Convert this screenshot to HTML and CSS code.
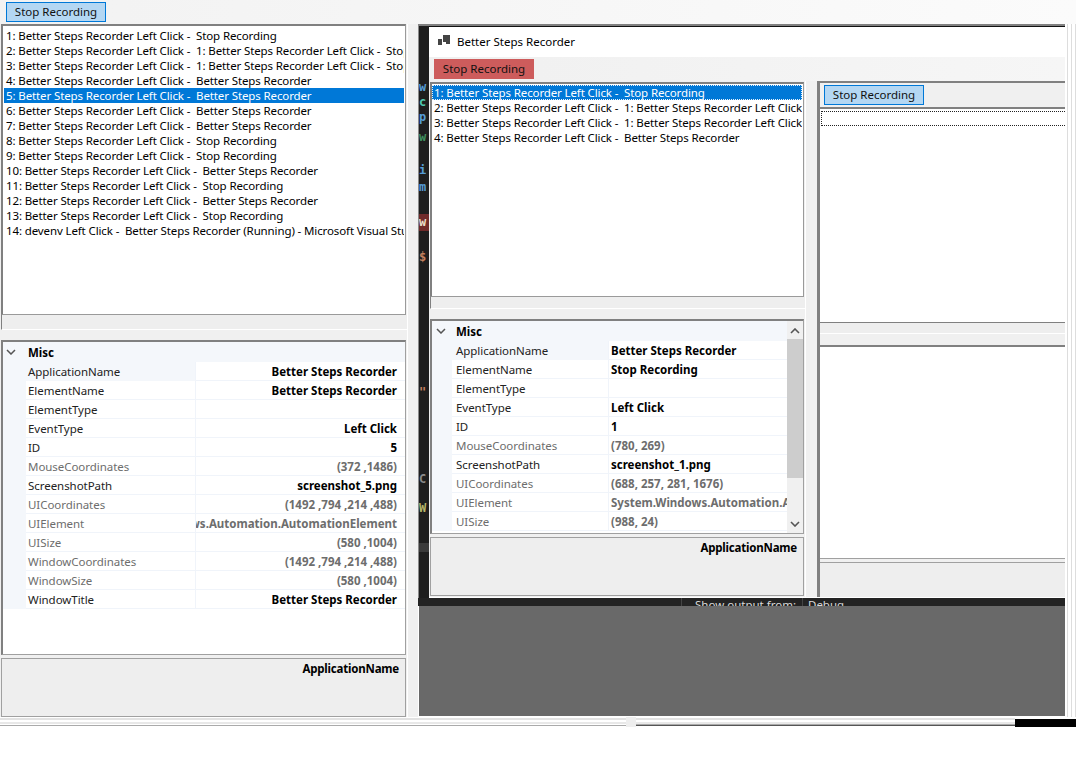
FILE: index.html
```html
<!DOCTYPE html>
<html lang="en">
<head>
<meta charset="utf-8">
<title>Better Steps Recorder</title>
<link rel="stylesheet" href="styles.css">
</head>
<body>
<div class="page">
  <div class="shell">
    <div class="topbar"><button class="btn btn-blue">Stop Recording</button></div>
    <div class="workspace">
      <section class="left">
        <div class="list list-left">
          <div class="row">1: Better Steps Recorder Left Click -  Stop Recording</div>
          <div class="row">2: Better Steps Recorder Left Click -  1: Better Steps Recorder Left Click -  Stop Recording</div>
          <div class="row">3: Better Steps Recorder Left Click -  1: Better Steps Recorder Left Click -  Stop Recording</div>
          <div class="row">4: Better Steps Recorder Left Click -  Better Steps Recorder</div>
          <div class="row selected">5: Better Steps Recorder Left Click -  Better Steps Recorder</div>
          <div class="row">6: Better Steps Recorder Left Click -  Better Steps Recorder</div>
          <div class="row">7: Better Steps Recorder Left Click -  Better Steps Recorder</div>
          <div class="row">8: Better Steps Recorder Left Click -  Stop Recording</div>
          <div class="row">9: Better Steps Recorder Left Click -  Stop Recording</div>
          <div class="row">10: Better Steps Recorder Left Click -  Better Steps Recorder</div>
          <div class="row">11: Better Steps Recorder Left Click -  Stop Recording</div>
          <div class="row">12: Better Steps Recorder Left Click -  Better Steps Recorder</div>
          <div class="row">13: Better Steps Recorder Left Click -  Stop Recording</div>
          <div class="row">14: devenv Left Click -  Better Steps Recorder (Running) - Microsoft Visual Studio</div>
        </div>
        <div class="band band-left"></div>
        <div class="grid grid-left">
          <div class="grid-body">
            <div class="cat"><svg class="chev" viewBox="0 0 10 6"><path d="M1 1l4 4 4-4" fill="none" stroke="#555" stroke-width="1.5"/></svg>Misc</div>
            <div class="prop"><span class="name current">ApplicationName</span><span class="val">Better Steps Recorder</span></div>
            <div class="prop"><span class="name">ElementName</span><span class="val">Better Steps Recorder</span></div>
            <div class="prop"><span class="name">ElementType</span><span class="val"></span></div>
            <div class="prop"><span class="name">EventType</span><span class="val">Left Click</span></div>
            <div class="prop"><span class="name">ID</span><span class="val">5</span></div>
            <div class="prop ro"><span class="name">MouseCoordinates</span><span class="val">(372 ,1486)</span></div>
            <div class="prop"><span class="name">ScreenshotPath</span><span class="val">screenshot_5.png</span></div>
            <div class="prop ro"><span class="name">UICoordinates</span><span class="val">(1492 ,794 ,214 ,488)</span></div>
            <div class="prop ro"><span class="name">UIElement</span><span class="val">System.Windows.Automation.AutomationElement</span></div>
            <div class="prop ro"><span class="name">UISize</span><span class="val">(580 ,1004)</span></div>
            <div class="prop ro"><span class="name">WindowCoordinates</span><span class="val">(1492 ,794 ,214 ,488)</span></div>
            <div class="prop ro"><span class="name">WindowSize</span><span class="val">(580 ,1004)</span></div>
            <div class="prop"><span class="name">WindowTitle</span><span class="val">Better Steps Recorder</span></div>
          </div>
        </div>
        <div class="help help-left">ApplicationName</div>
      </section>

      <section class="right">
        <div class="desk">
          <div class="code">
            <span class="ln first blue">w</span>
            <span class="ln green">c</span>
            <span class="ln blue">p</span>
            <span class="ln dgreen gap5">w</span>
            <span class="ln blue gap18">i</span>
            <span class="ln blue gap2">m</span>
            <span class="ln redbg gap19">w</span>
            <span class="ln orange gap19">$</span>
            <span class="ln orange gap120">"</span>
            <span class="ln grey gap72">C</span>
            <span class="ln olive gap14">W</span>
            <span class="ln block gap27"></span>
          </div>
          <div class="window">
            <div class="titlebar">
              <svg class="app-icon" viewBox="0 0 13 13"><path d="M1 5h4v6H1z" fill="#444"/><path d="M6 1h7v9H9V8H6z" fill="#444"/></svg>
              <span>Better Steps Recorder</span>
            </div>
            <div class="toolbar"><button class="btn btn-red">Stop Recording</button></div>
            <div class="panes">
              <div class="pane-a">
                <div class="list list-a">
                  <div class="row selected focus">1: Better Steps Recorder Left Click -  Stop Recording</div>
                  <div class="row">2: Better Steps Recorder Left Click -  1: Better Steps Recorder Left Click -  Stop Recording</div>
                  <div class="row">3: Better Steps Recorder Left Click -  1: Better Steps Recorder Left Click -  Stop Recording</div>
                  <div class="row">4: Better Steps Recorder Left Click -  Better Steps Recorder</div>
                </div>
                <div class="band band-a"></div>
                <div class="grid grid-a">
                  <div class="grid-body">
                    <div class="cat"><svg class="chev" viewBox="0 0 10 6"><path d="M1 1l4 4 4-4" fill="none" stroke="#555" stroke-width="1.5"/></svg>Misc</div>
                    <div class="prop"><span class="name current">ApplicationName</span><span class="val">Better Steps Recorder</span></div>
                    <div class="prop"><span class="name">ElementName</span><span class="val">Stop Recording</span></div>
                    <div class="prop"><span class="name">ElementType</span><span class="val"></span></div>
                    <div class="prop"><span class="name">EventType</span><span class="val">Left Click</span></div>
                    <div class="prop"><span class="name">ID</span><span class="val">1</span></div>
                    <div class="prop ro"><span class="name">MouseCoordinates</span><span class="val">(780, 269)</span></div>
                    <div class="prop"><span class="name">ScreenshotPath</span><span class="val">screenshot_1.png</span></div>
                    <div class="prop ro"><span class="name">UICoordinates</span><span class="val">(688, 257, 281, 1676)</span></div>
                    <div class="prop ro"><span class="name">UIElement</span><span class="val">System.Windows.Automation.AutomationElement</span></div>
                    <div class="prop ro"><span class="name">UISize</span><span class="val">(988, 24)</span></div>
                  </div>
                  <div class="scrollbar">
                    <svg class="arrow" viewBox="0 0 10 6"><path d="M1 5l4-4 4 4" fill="none" stroke="#555" stroke-width="1.6"/></svg>
                    <div class="thumb"></div>
                    <svg class="arrow arrow-down" viewBox="0 0 10 6"><path d="M1 1l4 4 4-4" fill="none" stroke="#555" stroke-width="1.6"/></svg>
                  </div>
                </div>
                <div class="help help-a">ApplicationName</div>
              </div>
              <div class="pane-b">
                <div class="bar-b"><button class="btn btn-blue">Stop Recording</button></div>
                <div class="list-b"><div class="focus-empty"></div></div>
                <div class="band band-b"></div>
                <div class="box-b"></div>
                <div class="foot-b"></div>
              </div>
            </div>
          </div>
        </div>
        <div class="output"><span class="output-text">Show output from:</span><span class="output-val">Debug</span></div>
        <div class="dim"></div>
      </section>
      <div class="stripes"></div>
    </div>
  </div>
  <div class="bottom">
    <div class="bottom-a"></div>
    <div class="bottom-grip"></div>
    <div class="bottom-b"></div>
    <div class="bottom-black"></div>
  </div>
</div>
</body>
</html>
```
FILE: styles.css
```css
* { box-sizing: border-box; }
html, body { margin: 0; padding: 0; background: #fff; }
.page {
  width: 1083px; height: 758px; overflow: hidden; background: #fff;
  font-family: "Noto Sans", "Open Sans", sans-serif; font-size: 11.5px; color: #000;
}
.shell { width: 1076px; height: 717px; display: flex; flex-direction: column; background: #f0f0f0; }
.topbar { height: 24px; padding: 2px 0 0 6px; background: linear-gradient(90deg, #f2f2f2, #fbfbfb); }
.btn {
  display: block; width: 100px; height: 20px; padding: 0 0 2px; font: inherit; color: #111;
  border: 1px solid #0078d7; background: #b4d7f3;
}
.btn-red { background: #cd5c5c; border: 0; }
.workspace { flex: 1; display: flex; min-height: 0; }

.left {
  width: 408px; padding-left: 1px; display: flex; flex-direction: column;
  border-right: 1px solid #fff; margin-right: 10px; flex: none;
}
.list { background: #fff; overflow: hidden; border: 1px solid #9a9a9a; border-top: 2px solid #808080; border-left: 2px solid #808080; }
.list-left { width: 405px; height: 291px; padding: 2px 1px 0 1px; }
.row { height: 15px; line-height: 15px; padding-left: 2px; white-space: pre; overflow: hidden; letter-spacing: -.12px; }
.selected { background: #0078d7; color: #fff; }
.focus { outline: 1px dotted #e8f2fb; outline-offset: -1px; }
.band { background: #eee; border-bottom: 1px solid #fff; }
.band-left { width: 406px; height: 15px; border-left: 1px solid #808080; }
.grid {
  display: flex; background: #fff; overflow: hidden; width: 405px;
  border: 1px solid #a0a0a0; border-top: 2px solid #808080; border-left: 2px solid #808080;
}
.grid-left { height: 315px; margin-top: 10px; }
.grid-body { flex: 1; min-width: 0; }
.cat {
  height: 20px; display: flex; align-items: center; padding-left: 25px; position: relative;
  font-weight: 700; background: #f4f7fb;
}
.chev { width: 10px; height: 6px; position: absolute; left: 3px; top: 7px; }
.prop { display: flex; height: 19px; line-height: 19px; padding-left: 23px; background: #f4f7fb; }
.name {
  width: 170px; flex: none; padding: 0 0 0 2px; background: #fff; color: #222;
  border-bottom: 1px solid #f0f4fa; border-right: 1px solid #f0f4fa; letter-spacing: -.05px;
}
.name.current { background: #f4f7fb; border-bottom-color: #f4f7fb; }
.val {
  flex: 1; min-width: 0; display: flex; justify-content: flex-end; overflow: hidden; white-space: pre;
  padding-right: 8px; font-weight: 700; background: #fff; border-bottom: 1px solid #f0f4fa;
}
.ro .name, .ro .val { color: #6d6d6d; }
.help {
  font-weight: 700; text-align: right; background: #eee; border: 1px solid #a0a0a0;
  padding: 2px 6px 0 0; letter-spacing: -.2px;
}
.help-left { width: 405px; height: 59px; margin-top: 3px; }

.right { width: 647px; flex: none; display: flex; flex-direction: column; }
.desk { height: 574px; display: flex; border-top: 2px solid #808080; border-left: 1px solid #8a8a8a; }
.code {
  width: 10px; flex: none; background: #1e1e1e; overflow: hidden; display: flex; flex-direction: column;
  font: 700 12px/15px "DejaVu Sans Mono", monospace; padding-top: 54px;
}
.ln { height: 15px; flex: none; display: block; }
.blue { color: #569cd6; }
.green { color: #4ec9b0; }
.dgreen { color: #3f8f5f; }
.orange { color: #c4805e; }
.grey { color: #8a8a8a; }
.olive { color: #b5b56a; }
.redbg { background: #6f2a2a; color: #e8dcc8; height: 17px; line-height: 17px; }
.block { background: #3a3a3a; height: 9px; }
.gap2 { margin-top: 2px; }
.gap5 { margin-top: 5px; }
.gap14 { margin-top: 14px; }
.gap18 { margin-top: 18px; }
.gap19 { margin-top: 19px; }
.gap27 { margin-top: 27px; }
.gap72 { margin-top: 72px; }
.gap120 { margin-top: 120px; }
.window { flex: 1; min-width: 0; display: flex; flex-direction: column; background: #f0f0f0; border-top: 1px solid #111; border-bottom: 1px solid #fff; }
.titlebar { height: 30px; flex: none; background: #fff; display: flex; align-items: center; gap: 7px; padding: 0 0 2px 8px; }
.app-icon { width: 13px; height: 13px; margin-top: -1px; }
.toolbar { height: 24px; flex: none; padding: 2px 0 0 5px; background: linear-gradient(90deg, #f0f0f0, #f6f6f6); }
.panes { flex: 1; display: flex; min-height: 0; }
.pane-a { width: 377px; flex: none; padding: 1px 0 0 1px; display: flex; flex-direction: column; border-right: 1px solid #fff; }
.list-a { width: 374px; height: 215px; flex: none; padding: 1px 1px 0 0; }
.band-a { width: 375px; height: 12px; flex: none; border-left: 1px solid #808080; }
.grid-a { width: 374px; height: 215px; flex: none; margin-top: 10px; }
.grid-a .prop { padding-left: 20px; }
.grid-a .cat { padding-left: 24px; }
.grid-a .chev { left: 4px; }
.grid-a .name { width: 157px; padding-left: 4px; }
.grid-a .val { justify-content: flex-start; padding: 0 0 0 2px; }
.scrollbar { width: 16px; flex: none; background: #f0f0f0; display: flex; flex-direction: column; align-items: center; }
.arrow { width: 10px; height: 6px; flex: none; margin: 7px 0 5px; }
.arrow-down { margin: 0 0 6px; }
.thumb { width: 16px; height: 139px; background: #cdcdcd; margin-bottom: auto; }
.help-a { width: 374px; height: 59px; flex: none; margin-top: 3px; }

.pane-b { flex: 1; min-width: 0; margin-left: 11px; display: flex; flex-direction: column; border-left: 3px solid #808080; }
.bar-b { height: 26px; flex: none; border-top: 2px solid #808080; padding: 2px 0 0 4px; }
.list-b { height: 216px; flex: none; background: #fff; border-top: 2px solid #808080; border-bottom: 1px solid #808080; padding: 2px 0 0 1px; }
.focus-empty { height: 15px; border: 1px dotted #222; border-right: 0; }
.band-b { height: 11px; flex: none; border-bottom: 1px solid #fff; }
.box-b { height: 214px; flex: none; margin-top: 11px; background: #fff; border-top: 2px solid #808080; border-bottom: 1px solid #a0a0a0; }
.foot-b { flex: 1; border-top: 1px solid #a0a0a0; margin-top: 3px; background: #eee; }

.output { height: 8px; flex: none; background: #232323; color: #d8d8d8; overflow: hidden; display: flex; line-height: 14px; padding-left: 263px; gap: 6px; }
.output-text { border-left: 1px solid #444; padding-left: 13px; }
.output-val { border-left: 1px solid #444; padding-left: 5px; }
.dim { flex: 1; background: #696969; border-left: 1px solid #fff; border-bottom: 1px solid #fff; }

.stripes {
  flex: 1; margin-top: 0;
  background: repeating-linear-gradient(90deg, #fff 0 2px, #ddd 2px 3px, #fff 3px 4px);
}
.bottom { width: 1076px; height: 10px; display: flex; }
.bottom-a { width: 626px; flex: none; background: repeating-linear-gradient(180deg, #fff 0 1px, #e2e2e2 1px 3px, #fff 3px 5px, #e8e8e8 5px 7px, #fff 7px 8px, #aaa 8px 9px, #fff 9px 10px); }
.bottom-grip { width: 10px; flex: none; background: #eee; }
.bottom-b { flex: 1; background: repeating-linear-gradient(180deg, #fff 0 1px, #e2e2e2 1px 3px, #fff 3px 5px, #e8e8e8 5px 7px, #aaa 7px 8px, #555 8px 9px, #fff 9px 10px); }
.bottom-black { width: 61px; flex: none; margin-top: 2px; height: 8px; background: #000; }
```
